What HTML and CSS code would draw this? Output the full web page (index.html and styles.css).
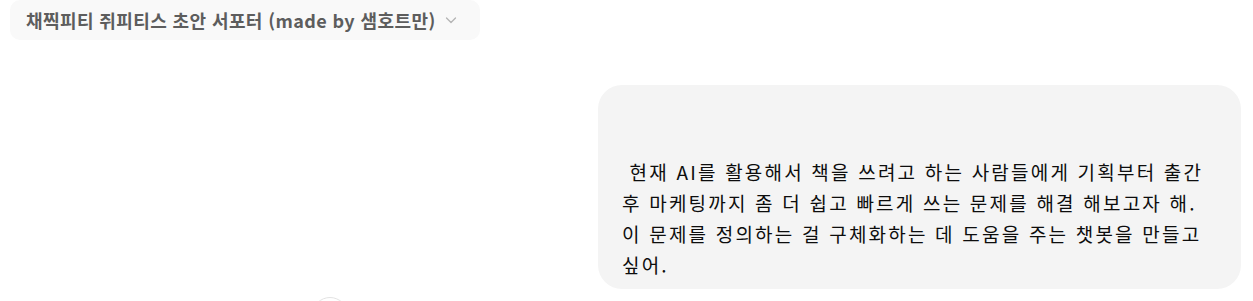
FILE: index.html
```html
<!DOCTYPE html>
<html lang="ko">
<head>
<meta charset="utf-8">
<title>채찍피티 쥐피티스 초안 서포터</title>
<link rel="stylesheet" href="styles.css">
</head>
<body>
<header class="topbar">
  <button class="model-pill" type="button">
    <span class="model-name">채찍피티 쥐피티스 초안 서포터 (made by 샘호트만)</span>
    <svg class="chev" width="12" height="12" viewBox="0 0 12 12" aria-hidden="true"><path d="M1.5 4 L6 8.5 L10.5 4" fill="none" stroke="currentColor" stroke-width="1.3" stroke-linecap="round" stroke-linejoin="round"/></svg>
  </button>
</header>
<main class="thread">
  <div class="user-msg">

 현재 AI를 활용해서 책을 쓰려고 하는 사람들에게 기획부터 출간 후 마케팅까지 좀 더 쉽고 빠르게 쓰는 문제를 해결 해보고자 해. 이 문제를 정의하는 걸 구체화하는 데 도움을 주는 챗봇을 만들고 싶어.</div>
</main>
<button class="scroll-btn" type="button" aria-label="scroll down"></button>
</body>
</html>
```
FILE: styles.css
```css
html, body {
  margin: 0;
  padding: 0;
  background: #ffffff;
  overflow: hidden;
}
body {
  width: 1253px;
  height: 301px;
  position: relative;
  font-family: "Noto Sans CJK KR", "Noto Sans", sans-serif;
}
.topbar {
  display: flex;
  padding: 0 0 0 10px;
  height: 40px;
}
.model-pill {
  display: flex;
  align-items: center;
  gap: 9px;
  height: 40px;
  width: 470px;
  padding: 0 0 0 16px;
  border: 0;
  border-radius: 10px;
  background: #f9f9f9;
  color: #5d5d5d;
  font-family: inherit;
  font-size: 18px;
  font-weight: 700;
  letter-spacing: 0.4px;
  cursor: pointer;
}
.model-name {
  white-space: nowrap;
  line-height: 1;
}
.chev {
  color: #b4b4b4;
  flex: none;
}
.thread {
  display: flex;
  justify-content: flex-end;
  padding: 45px 12px 0 0;
}
.user-msg {
  width: 643px;
  box-sizing: border-box;
  padding: 11px 20px 9px 24px;
  background: #f4f4f4;
  border-radius: 24px;
  color: #0d0d0d;
  font-size: 19px;
  letter-spacing: 2.2px;
  line-height: 30.7px;
  white-space: pre-wrap;
  word-break: keep-all;
}
.scroll-btn {
  position: absolute;
  left: 312px;
  top: 297px;
  width: 36px;
  height: 36px;
  border-radius: 50%;
  border: 1px solid #e3e3e3;
  background: #ffffff;
  padding: 0;
}
```
